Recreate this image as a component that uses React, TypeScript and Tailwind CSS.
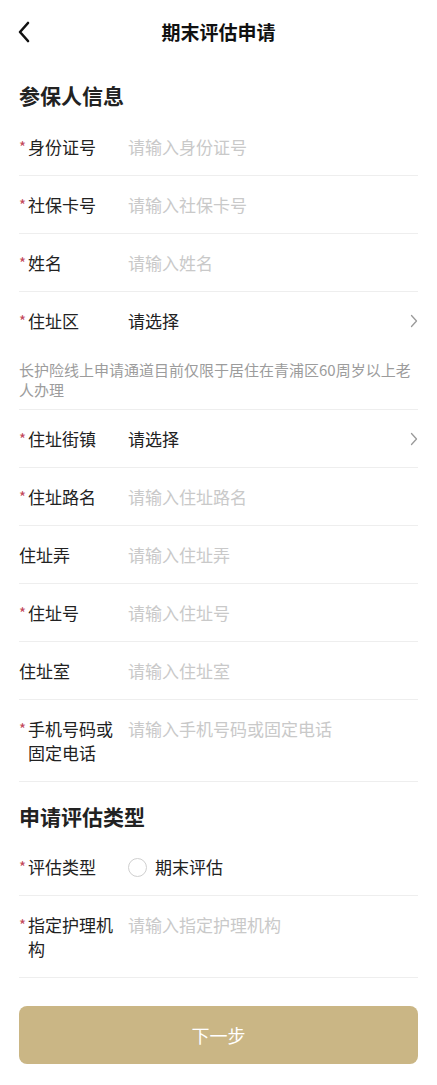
import React from "react";

type Field = {
  label: string;
  required?: boolean;
  placeholder?: string;
  select?: boolean;
  divider?: boolean;
};

const personFields: Field[] = [
  { label: "身份证号", required: true, placeholder: "请输入身份证号" },
  { label: "社保卡号", required: true, placeholder: "请输入社保卡号" },
  { label: "姓名", required: true, placeholder: "请输入姓名" },
  { label: "住址区", required: true, select: true, divider: false },
];

const addressFields: Field[] = [
  { label: "住址街镇", required: true, select: true },
  { label: "住址路名", required: true, placeholder: "请输入住址路名" },
  { label: "住址弄", placeholder: "请输入住址弄" },
  { label: "住址号", required: true, placeholder: "请输入住址号" },
  { label: "住址室", placeholder: "请输入住址室" },
  { label: "手机号码或固定电话", required: true, placeholder: "请输入手机号码或固定电话" },
];

function Chevron() {
  return (
    <svg width="8" height="14" viewBox="0 0 8 14" fill="none" className="mt-[5px]">
      <path d="M1.5 1.5 L6.5 7 L1.5 12.5" stroke="#9a9a9a" strokeWidth="1.3" strokeLinecap="round" strokeLinejoin="round" />
    </svg>
  );
}

function Label({ text, required }: { text: string; required?: boolean }) {
  return (
    <div className="flex w-[109px] shrink-0">
      {required && <span className="w-[9px] shrink-0 text-[15px] leading-[24px] text-[#c2465a]">*</span>}
      <span className="w-[90px] text-[17px] leading-[24px] text-[#222222]">{text}</span>
    </div>
  );
}

function Row({ f }: { f: Field }) {
  return (
    <div className={`flex items-start pb-[16px] pt-[17px] ${f.divider === false ? "" : "border-b border-[#eeeeee]"}`}>
      <Label text={f.label} required={f.required} />
      {f.select ? (
        <div className="flex flex-1 items-start justify-between">
          <span className="text-[17px] leading-[24px] text-[#222222]">请选择</span>
          <Chevron />
        </div>
      ) : (
        <span className="flex-1 text-[17px] leading-[24px] text-[#c9c9c9]">{f.placeholder}</span>
      )}
    </div>
  );
}

export default function App() {
  return (
    <div
      className="min-h-[1085px] w-[437px] bg-white"
      style={{ fontFamily: '"Noto Sans CJK SC", "Noto Sans", sans-serif' }}
    >
      {/* header */}
      <div className="relative flex h-[64px] items-center justify-center">
        <svg width="14" height="22" viewBox="0 0 14 22" fill="none" className="absolute left-[17px] top-[21px]">
          <path d="M11 2 L3 11 L11 20" stroke="#111111" strokeWidth="2.6" strokeLinecap="round" strokeLinejoin="round" />
        </svg>
        <h1 className="text-[19px] font-bold text-[#111111]">期末评估申请</h1>
      </div>

      <div className="px-[19px]">
        <h2 className="pb-[8px] pt-[16px] text-[21px] font-bold leading-[30px] text-[#222222]">参保人信息</h2>
        {personFields.map((f) => (
          <Row key={f.label} f={f} />
        ))}
        <p className="border-b border-[#eeeeee] pb-[9px] pt-[11px] text-[15px] leading-[20px] text-[#9c9c9c]">
          长护险线上申请通道目前仅限于居住在青浦区60周岁以上老人办理
        </p>
        {addressFields.map((f) => (
          <Row key={f.label} f={f} />
        ))}

        <h2 className="pb-[7px] pt-[19px] text-[21px] font-bold leading-[30px] text-[#222222]">申请评估类型</h2>
        <div className="flex items-start border-b border-[#eeeeee] pb-[16px] pt-[17px]">
          <Label text="评估类型" required />
          <label className="flex items-center gap-[8px]">
            <span className="h-[19px] w-[19px] rounded-full border border-[#cfcfcf]" />
            <span className="text-[17px] leading-[24px] text-[#222222]">期末评估</span>
          </label>
        </div>
        <Row f={{ label: "指定护理机构", required: true, placeholder: "请输入指定护理机构" }} />

        <button className="mt-[28px] h-[58px] w-full rounded-[8px] bg-[#cab685] text-[18px] text-white">下一步</button>
      </div>
    </div>
  );
}
